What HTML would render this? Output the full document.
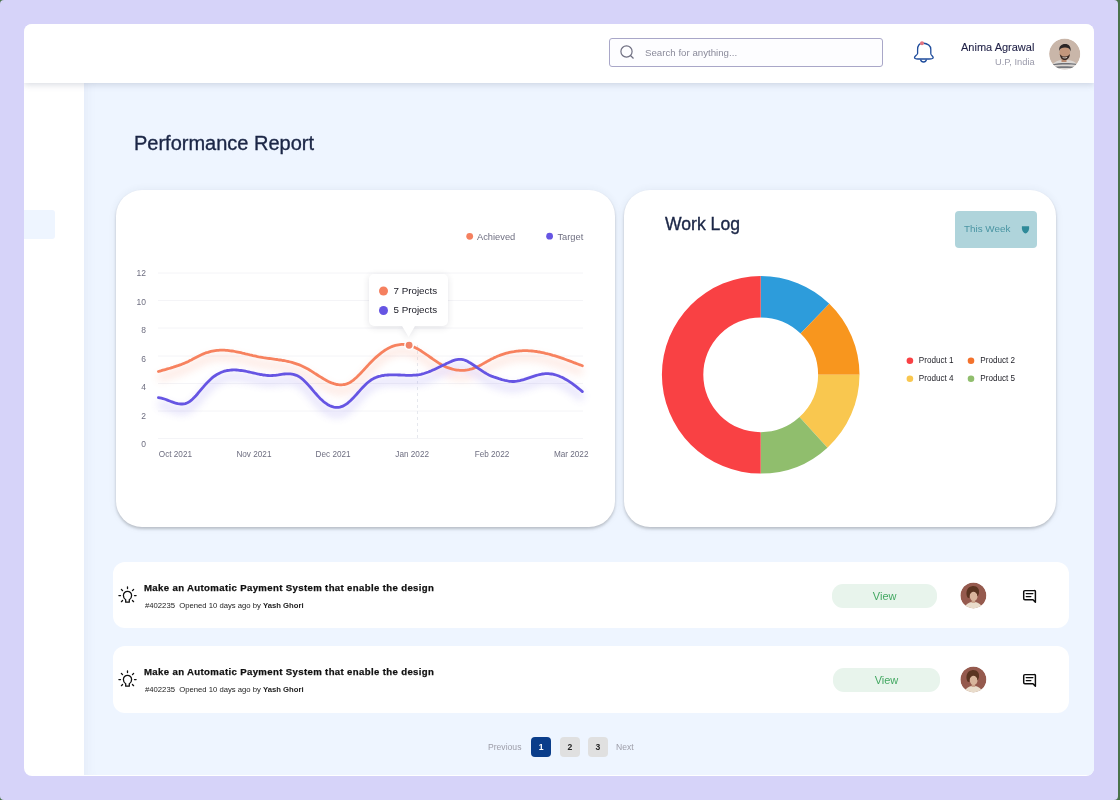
<!DOCTYPE html>
<html><head><meta charset="utf-8">
<style>
html,body{margin:0;padding:0;width:1120px;height:800px;overflow:hidden;background:#4a734b;}
*{box-sizing:border-box;}
body{font-family:"Liberation Sans",sans-serif;position:relative;}
.abs{position:absolute;}
#outer{position:absolute;left:0;top:0;width:1118px;height:800px;background:#d6d3f9;border-radius:4px;}
#frame{position:absolute;left:24px;top:24px;width:1070px;height:751.5px;background:#fff;border-radius:8px;overflow:hidden;}
#main{position:absolute;left:60px;top:59px;width:1010px;height:692px;background:#eef5ff;box-shadow:inset 12px 0 12px -10px rgba(110,120,150,0.08);}
#header{position:absolute;left:0;top:0;width:1070px;height:59px;background:#fff;box-shadow:0 2px 6px rgba(90,100,130,0.22);z-index:3;}
#sidehl{position:absolute;left:0;top:186px;width:31px;height:29px;background:#eef5ff;border-radius:0 3px 3px 0;}
.card{position:absolute;background:#fff;border-radius:26px;box-shadow:0 2px 3px rgba(0,0,0,0.2),0 0 8px rgba(40,50,80,0.07);}
.row{position:absolute;background:#fff;border-radius:12px;}
.t{position:absolute;white-space:pre;line-height:1;will-change:transform;}
svg{will-change:transform;}
</style></head><body>
<div id="outer"></div>
<div id="frame">
  <div id="main"></div>
  <div id="sidehl"></div>
  <div id="header"></div>
</div>

<!-- header content -->
<div class="abs" style="left:609px;top:38px;width:274px;height:29px;border:1px solid #a9a7c8;border-radius:3px;background:#fdfdff;z-index:5"></div>
<svg class="abs" style="left:0;top:0;z-index:6" width="1120" height="800">
  <circle cx="626.5" cy="51.5" r="5.6" fill="none" stroke="#6f6f82" stroke-width="1.2"/>
  <line x1="630.5" y1="55.5" x2="633.5" y2="58.5" stroke="#6f6f82" stroke-width="1.2"/>
</svg>
<div class="t" style="left:645px;top:48.3px;font-size:9.7px;color:#8a8a9a;z-index:6">Search for anything...</div>

<svg class="abs" style="left:0;top:0;z-index:6" width="1120" height="800">
  <path d="M922.5,43 C919,43.5 917.6,46 917.6,49.5 L917.6,53.5 C917.4,55 914.5,56.2 914.5,57.5 C914.5,58.6 916,59 918,59 L929,59 C931,59 933.2,58.6 933.2,57.5 C933.2,56.2 930.5,55 930.8,53.5 L930.8,49.5 C930.8,46 928,43.5 922.5,43 Z" fill="none" stroke="#1f4c9c" stroke-width="1.3"/>
  <path d="M920.5,59.5 C921,61.5 922.5,62 923.6,62 C924.7,62 926,61.5 926.5,59.5" fill="none" stroke="#1f4c9c" stroke-width="1.3"/>
  <circle cx="922" cy="43.2" r="2" fill="#e47581"/>
</svg>
<div class="t" style="left:961px;top:42px;font-size:11px;color:#1f2046;z-index:6;-webkit-text-stroke:0.1px #1f2046">Anima Agrawal</div>
<div class="t" style="left:995px;top:58px;font-size:9.3px;color:#9a9aaa;z-index:6">U.P, India</div>
<svg class="abs" style="left:0;top:0;z-index:6" width="1120" height="800">
  <clipPath id="hav"><circle cx="1064.7" cy="54" r="15.6"/></clipPath>
  <g clip-path="url(#hav)">
    <circle cx="1064.7" cy="54" r="15.6" fill="#c9b6a9"/>
    <path d="M1053,64 C1056,60.5 1060,60 1064,60 C1069,60 1073,60.5 1076,63 L1078,72 L1051,72 Z" fill="#dcd7d3"/>
    <path d="M1053,64.3 C1058,62.8 1070,62.8 1076,63.8 L1076.5,65 C1070,64.2 1058,64.3 1052.5,65.6 Z" fill="#6e7076"/>
    <path d="M1052,67 C1058,66 1070,66 1077,67 L1077,68.5 C1070,67.6 1058,67.8 1052,68.6 Z" fill="#75777c"/>
    <rect x="1061.5" y="57" width="5" height="5" fill="#b98a70"/>
    <ellipse cx="1064.8" cy="52.5" rx="5.3" ry="6.8" fill="#c4977c"/>
    <path d="M1059.8,54 C1060.2,58.5 1062.5,60 1064.8,60 C1067.5,60 1069.6,58.2 1069.9,54 C1068.5,56 1066.5,56.5 1064.8,56.5 C1063,56.5 1061,56 1059.8,54 Z" fill="#3a2a24"/>
    <path d="M1059.2,51 C1058.8,46 1061.5,44 1065,44 C1069,44 1071.2,46.5 1070.6,51.5 C1069.8,48.5 1068,47.6 1065,47.6 C1062,47.6 1060,48.5 1059.2,51 Z" fill="#2b2627"/>
    <path d="M1062.5,57.2 C1063.8,58.2 1066,58.2 1067.2,57.2" stroke="#f2e8e0" stroke-width="0.9" fill="none"/>
  </g>
</svg>

<!-- title -->
<div class="t" style="left:133.5px;top:132.8px;font-size:20px;color:#1b2646;-webkit-text-stroke:0.35px #1b2646">Performance Report</div>

<!-- cards -->
<div class="card" style="left:116px;top:189.5px;width:499px;height:337.8px"></div>
<div class="card" style="left:624px;top:189.5px;width:432px;height:337.8px"></div>


<!-- chart -->
<svg class="abs" style="left:0;top:0;z-index:2" width="1120" height="800">
  <defs>
    <filter id="glow" x="-10%" y="-50%" width="120%" height="200%"><feGaussianBlur stdDeviation="4.2"/></filter>
    <filter id="tipsh" x="-30%" y="-30%" width="160%" height="160%"><feGaussianBlur stdDeviation="3.5"/></filter>
  </defs>
  <line x1="158" y1="273" x2="583" y2="273" stroke="#f4f4f7" stroke-width="1"/><line x1="158" y1="300.5" x2="583" y2="300.5" stroke="#f4f4f7" stroke-width="1"/><line x1="158" y1="328" x2="583" y2="328" stroke="#f4f4f7" stroke-width="1"/><line x1="158" y1="356" x2="583" y2="356" stroke="#f4f4f7" stroke-width="1"/><line x1="158" y1="383.5" x2="583" y2="383.5" stroke="#f4f4f7" stroke-width="1"/><line x1="158" y1="411" x2="583" y2="411" stroke="#f4f4f7" stroke-width="1"/><line x1="158" y1="438.5" x2="583" y2="438.5" stroke="#f4f4f7" stroke-width="1"/>
  <g font-family="Liberation Sans" font-size="8.5" fill="#6e6e80"><text x="146" y="276" text-anchor="end">12</text><text x="146" y="304.5" text-anchor="end">10</text><text x="146" y="333" text-anchor="end">8</text><text x="146" y="361.5" text-anchor="end">6</text><text x="146" y="390" text-anchor="end">4</text><text x="146" y="418.5" text-anchor="end">2</text><text x="146" y="447" text-anchor="end">0</text></g>
  <line x1="417.5" y1="345" x2="417.5" y2="438" stroke="#e6e8ee" stroke-width="1" stroke-dasharray="3,3"/>
  <g filter="url(#glow)" opacity="0.22">
    <path d="M158.4,371.5 L159.9,371.1 L161.4,370.7 L162.9,370.2 L164.4,369.8 L165.9,369.4 L167.4,368.9 L168.9,368.5 L170.4,368.1 L171.9,367.6 L173.4,367.2 L174.9,366.7 L176.4,366.2 L177.9,365.7 L179.4,365.1 L180.9,364.6 L182.4,364.0 L183.9,363.4 L185.4,362.7 L186.9,362.1 L188.4,361.4 L189.9,360.6 L191.4,359.9 L192.9,359.1 L194.4,358.3 L195.9,357.5 L197.4,356.7 L198.9,355.9 L200.4,355.2 L201.9,354.5 L203.4,353.9 L204.9,353.3 L206.4,352.7 L207.9,352.3 L209.4,351.8 L210.9,351.4 L212.4,351.1 L213.9,350.8 L215.4,350.6 L216.9,350.4 L218.4,350.3 L219.9,350.2 L221.4,350.2 L222.9,350.2 L224.4,350.2 L225.9,350.3 L227.4,350.4 L228.9,350.6 L230.4,350.8 L231.9,351.0 L233.4,351.2 L234.9,351.5 L236.4,351.8 L237.9,352.1 L239.4,352.4 L240.9,352.7 L242.4,353.1 L243.9,353.4 L245.4,353.8 L246.9,354.1 L248.4,354.5 L249.9,354.9 L251.4,355.2 L252.9,355.6 L254.4,355.9 L255.9,356.2 L257.4,356.6 L258.9,356.9 L260.4,357.1 L261.9,357.4 L263.4,357.7 L264.9,357.9 L266.4,358.1 L267.9,358.3 L269.4,358.5 L270.9,358.7 L272.4,358.9 L273.9,359.1 L275.4,359.3 L276.9,359.5 L278.4,359.8 L279.9,360.0 L281.4,360.2 L282.9,360.5 L284.4,360.7 L285.9,361.0 L287.4,361.3 L288.9,361.7 L290.4,362.0 L291.9,362.4 L293.4,362.8 L294.9,363.3 L296.4,363.8 L297.9,364.3 L299.4,364.9 L300.9,365.5 L302.4,366.2 L303.9,366.9 L305.4,367.7 L306.9,368.5 L308.4,369.3 L309.9,370.2 L311.4,371.1 L312.9,372.1 L314.4,373.1 L315.9,374.0 L317.4,375.0 L318.9,376.0 L320.4,376.9 L321.9,377.8 L323.4,378.7 L324.9,379.6 L326.4,380.4 L327.9,381.2 L329.4,381.9 L330.9,382.6 L332.4,383.2 L333.9,383.7 L335.4,384.1 L336.9,384.5 L338.4,384.7 L339.9,384.8 L341.4,384.8 L342.9,384.7 L344.4,384.5 L345.9,384.1 L347.4,383.6 L348.9,383.0 L350.4,382.2 L351.9,381.2 L353.4,380.1 L354.9,378.8 L356.4,377.5 L357.9,376.1 L359.4,374.6 L360.9,373.0 L362.4,371.4 L363.9,369.8 L365.4,368.1 L366.9,366.5 L368.4,364.9 L369.9,363.3 L371.4,361.7 L372.9,360.2 L374.4,358.8 L375.9,357.4 L377.4,356.1 L378.9,354.8 L380.4,353.6 L381.9,352.4 L383.4,351.3 L384.9,350.3 L386.4,349.4 L387.9,348.5 L389.4,347.8 L390.9,347.1 L392.4,346.4 L393.9,345.9 L395.4,345.4 L396.9,345.1 L398.4,344.8 L399.9,344.6 L401.4,344.4 L402.9,344.4 L404.4,344.5 L405.9,344.6 L407.4,344.9 L408.9,345.2 L410.4,345.7 L411.9,346.2 L413.4,346.8 L414.9,347.5 L416.4,348.2 L417.9,349.0 L419.4,349.9 L420.9,350.8 L422.4,351.8 L423.9,352.8 L425.4,353.8 L426.9,354.9 L428.4,355.9 L429.9,357.0 L431.4,358.0 L432.9,359.1 L434.4,360.1 L435.9,361.1 L437.4,362.1 L438.9,363.1 L440.4,364.0 L441.9,364.9 L443.4,365.7 L444.9,366.4 L446.4,367.1 L447.9,367.7 L449.4,368.2 L450.9,368.7 L452.4,369.2 L453.9,369.5 L455.4,369.8 L456.9,370.1 L458.4,370.2 L459.9,370.3 L461.4,370.4 L462.9,370.3 L464.4,370.3 L465.9,370.1 L467.4,369.9 L468.9,369.6 L470.4,369.2 L471.9,368.8 L473.4,368.3 L474.9,367.8 L476.4,367.2 L477.9,366.5 L479.4,365.8 L480.9,365.0 L482.4,364.1 L483.9,363.3 L485.4,362.4 L486.9,361.6 L488.4,360.7 L489.9,359.9 L491.4,359.1 L492.9,358.4 L494.4,357.6 L495.9,357.0 L497.4,356.3 L498.9,355.7 L500.4,355.1 L501.9,354.6 L503.4,354.1 L504.9,353.6 L506.4,353.2 L507.9,352.8 L509.4,352.4 L510.9,352.1 L512.4,351.8 L513.9,351.6 L515.4,351.3 L516.9,351.1 L518.4,351.0 L519.9,350.8 L521.4,350.8 L522.9,350.7 L524.4,350.7 L525.9,350.7 L527.4,350.7 L528.9,350.8 L530.4,350.9 L531.9,351.0 L533.4,351.1 L534.9,351.3 L536.4,351.5 L537.9,351.8 L539.4,352.0 L540.9,352.3 L542.4,352.6 L543.9,352.9 L545.4,353.3 L546.9,353.6 L548.4,354.0 L549.9,354.4 L551.4,354.8 L552.9,355.3 L554.4,355.7 L555.9,356.2 L557.4,356.7 L558.9,357.2 L560.4,357.7 L561.9,358.2 L563.4,358.7 L564.9,359.2 L566.4,359.8 L567.9,360.3 L569.4,360.9 L570.9,361.4 L572.4,362.0 L573.9,362.6 L575.4,363.1 L576.9,363.7 L578.4,364.3 L579.9,364.8 L582.4,365.8" transform="translate(0,6.5)" fill="none" stroke="#f5805f" stroke-width="6"/>
    <path d="M158.4,397.7 L159.9,397.9 L161.4,398.2 L162.9,398.6 L164.4,399.0 L165.9,399.5 L167.4,400.1 L168.9,400.7 L170.4,401.3 L171.9,401.8 L173.4,402.4 L174.9,402.9 L176.4,403.3 L177.9,403.7 L179.4,403.9 L180.9,404.0 L182.4,404.0 L183.9,403.9 L185.4,403.6 L186.9,403.0 L188.4,402.3 L189.9,401.4 L191.4,400.2 L192.9,398.8 L194.4,397.3 L195.9,395.7 L197.4,394.0 L198.9,392.2 L200.4,390.4 L201.9,388.6 L203.4,386.9 L204.9,385.1 L206.4,383.5 L207.9,381.9 L209.4,380.4 L210.9,379.0 L212.4,377.7 L213.9,376.5 L215.4,375.5 L216.9,374.5 L218.4,373.7 L219.9,372.9 L221.4,372.3 L222.9,371.7 L224.4,371.2 L225.9,370.8 L227.4,370.5 L228.9,370.3 L230.4,370.1 L231.9,370.0 L233.4,369.9 L234.9,369.9 L236.4,370.0 L237.9,370.1 L239.4,370.3 L240.9,370.5 L242.4,370.7 L243.9,370.9 L245.4,371.2 L246.9,371.5 L248.4,371.8 L249.9,372.2 L251.4,372.5 L252.9,372.8 L254.4,373.2 L255.9,373.5 L257.4,373.9 L258.9,374.2 L260.4,374.5 L261.9,374.7 L263.4,375.0 L264.9,375.2 L266.4,375.4 L267.9,375.5 L269.4,375.6 L270.9,375.6 L272.4,375.5 L273.9,375.4 L275.4,375.3 L276.9,375.1 L278.4,374.9 L279.9,374.6 L281.4,374.4 L282.9,374.2 L284.4,374.0 L285.9,373.9 L287.4,373.8 L288.9,373.8 L290.4,373.9 L291.9,374.1 L293.4,374.3 L294.9,374.8 L296.4,375.3 L297.9,376.0 L299.4,376.9 L300.9,377.9 L302.4,379.1 L303.9,380.5 L305.4,381.9 L306.9,383.5 L308.4,385.1 L309.9,386.8 L311.4,388.5 L312.9,390.3 L314.4,392.1 L315.9,393.8 L317.4,395.5 L318.9,397.1 L320.4,398.7 L321.9,400.1 L323.4,401.5 L324.9,402.7 L326.4,403.7 L327.9,404.7 L329.4,405.5 L330.9,406.2 L332.4,406.7 L333.9,407.1 L335.4,407.3 L336.9,407.4 L338.4,407.3 L339.9,407.1 L341.4,406.6 L342.9,406.1 L344.4,405.3 L345.9,404.4 L347.4,403.3 L348.9,402.0 L350.4,400.7 L351.9,399.2 L353.4,397.7 L354.9,396.1 L356.4,394.5 L357.9,392.8 L359.4,391.1 L360.9,389.4 L362.4,387.8 L363.9,386.2 L365.4,384.7 L366.9,383.3 L368.4,382.0 L369.9,380.8 L371.4,379.8 L372.9,378.9 L374.4,378.1 L375.9,377.5 L377.4,376.9 L378.9,376.4 L380.4,376.1 L381.9,375.7 L383.4,375.5 L384.9,375.2 L386.4,375.1 L387.9,375.0 L389.4,374.9 L390.9,374.8 L392.4,374.8 L393.9,374.8 L395.4,374.9 L396.9,374.9 L398.4,375.0 L399.9,375.0 L401.4,375.1 L402.9,375.2 L404.4,375.2 L405.9,375.3 L407.4,375.3 L408.9,375.3 L410.4,375.3 L411.9,375.3 L413.4,375.2 L414.9,375.1 L416.4,375.0 L417.9,374.8 L419.4,374.6 L420.9,374.3 L422.4,373.9 L423.9,373.5 L425.4,373.0 L426.9,372.5 L428.4,372.0 L429.9,371.4 L431.4,370.8 L432.9,370.1 L434.4,369.4 L435.9,368.7 L437.4,368.0 L438.9,367.3 L440.4,366.6 L441.9,365.8 L443.4,365.1 L444.9,364.4 L446.4,363.6 L447.9,362.9 L449.4,362.2 L450.9,361.6 L452.4,360.9 L453.9,360.4 L455.4,359.9 L456.9,359.6 L458.4,359.3 L459.9,359.3 L461.4,359.3 L462.9,359.6 L464.4,360.0 L465.9,360.6 L467.4,361.3 L468.9,362.2 L470.4,363.0 L471.9,364.0 L473.4,365.0 L474.9,366.0 L476.4,367.0 L477.9,368.1 L479.4,369.1 L480.9,370.1 L482.4,371.1 L483.9,372.1 L485.4,373.0 L486.9,373.9 L488.4,374.7 L489.9,375.4 L491.4,376.1 L492.9,376.6 L494.4,377.2 L495.9,377.7 L497.4,378.2 L498.9,378.7 L500.4,379.1 L501.9,379.6 L503.4,380.0 L504.9,380.4 L506.4,380.7 L507.9,381.0 L509.4,381.3 L510.9,381.4 L512.4,381.5 L513.9,381.5 L515.4,381.3 L516.9,381.2 L518.4,380.9 L519.9,380.6 L521.4,380.2 L522.9,379.8 L524.4,379.4 L525.9,378.9 L527.4,378.4 L528.9,377.9 L530.4,377.4 L531.9,376.9 L533.4,376.4 L534.9,375.9 L536.4,375.4 L537.9,375.0 L539.4,374.6 L540.9,374.3 L542.4,374.0 L543.9,373.8 L545.4,373.7 L546.9,373.6 L548.4,373.6 L549.9,373.8 L551.4,374.0 L552.9,374.2 L554.4,374.6 L555.9,375.0 L557.4,375.5 L558.9,376.0 L560.4,376.7 L561.9,377.3 L563.4,378.1 L564.9,378.9 L566.4,379.7 L567.9,380.6 L569.4,381.6 L570.9,382.6 L572.4,383.7 L573.9,384.8 L575.4,385.9 L576.9,387.1 L578.4,388.3 L579.9,389.5 L582.4,391.6" transform="translate(0,6.5)" fill="none" stroke="#6c5ce7" stroke-width="6"/>
  </g>
  <path d="M158.4,371.5 L159.9,371.1 L161.4,370.7 L162.9,370.2 L164.4,369.8 L165.9,369.4 L167.4,368.9 L168.9,368.5 L170.4,368.1 L171.9,367.6 L173.4,367.2 L174.9,366.7 L176.4,366.2 L177.9,365.7 L179.4,365.1 L180.9,364.6 L182.4,364.0 L183.9,363.4 L185.4,362.7 L186.9,362.1 L188.4,361.4 L189.9,360.6 L191.4,359.9 L192.9,359.1 L194.4,358.3 L195.9,357.5 L197.4,356.7 L198.9,355.9 L200.4,355.2 L201.9,354.5 L203.4,353.9 L204.9,353.3 L206.4,352.7 L207.9,352.3 L209.4,351.8 L210.9,351.4 L212.4,351.1 L213.9,350.8 L215.4,350.6 L216.9,350.4 L218.4,350.3 L219.9,350.2 L221.4,350.2 L222.9,350.2 L224.4,350.2 L225.9,350.3 L227.4,350.4 L228.9,350.6 L230.4,350.8 L231.9,351.0 L233.4,351.2 L234.9,351.5 L236.4,351.8 L237.9,352.1 L239.4,352.4 L240.9,352.7 L242.4,353.1 L243.9,353.4 L245.4,353.8 L246.9,354.1 L248.4,354.5 L249.9,354.9 L251.4,355.2 L252.9,355.6 L254.4,355.9 L255.9,356.2 L257.4,356.6 L258.9,356.9 L260.4,357.1 L261.9,357.4 L263.4,357.7 L264.9,357.9 L266.4,358.1 L267.9,358.3 L269.4,358.5 L270.9,358.7 L272.4,358.9 L273.9,359.1 L275.4,359.3 L276.9,359.5 L278.4,359.8 L279.9,360.0 L281.4,360.2 L282.9,360.5 L284.4,360.7 L285.9,361.0 L287.4,361.3 L288.9,361.7 L290.4,362.0 L291.9,362.4 L293.4,362.8 L294.9,363.3 L296.4,363.8 L297.9,364.3 L299.4,364.9 L300.9,365.5 L302.4,366.2 L303.9,366.9 L305.4,367.7 L306.9,368.5 L308.4,369.3 L309.9,370.2 L311.4,371.1 L312.9,372.1 L314.4,373.1 L315.9,374.0 L317.4,375.0 L318.9,376.0 L320.4,376.9 L321.9,377.8 L323.4,378.7 L324.9,379.6 L326.4,380.4 L327.9,381.2 L329.4,381.9 L330.9,382.6 L332.4,383.2 L333.9,383.7 L335.4,384.1 L336.9,384.5 L338.4,384.7 L339.9,384.8 L341.4,384.8 L342.9,384.7 L344.4,384.5 L345.9,384.1 L347.4,383.6 L348.9,383.0 L350.4,382.2 L351.9,381.2 L353.4,380.1 L354.9,378.8 L356.4,377.5 L357.9,376.1 L359.4,374.6 L360.9,373.0 L362.4,371.4 L363.9,369.8 L365.4,368.1 L366.9,366.5 L368.4,364.9 L369.9,363.3 L371.4,361.7 L372.9,360.2 L374.4,358.8 L375.9,357.4 L377.4,356.1 L378.9,354.8 L380.4,353.6 L381.9,352.4 L383.4,351.3 L384.9,350.3 L386.4,349.4 L387.9,348.5 L389.4,347.8 L390.9,347.1 L392.4,346.4 L393.9,345.9 L395.4,345.4 L396.9,345.1 L398.4,344.8 L399.9,344.6 L401.4,344.4 L402.9,344.4 L404.4,344.5 L405.9,344.6 L407.4,344.9 L408.9,345.2 L410.4,345.7 L411.9,346.2 L413.4,346.8 L414.9,347.5 L416.4,348.2 L417.9,349.0 L419.4,349.9 L420.9,350.8 L422.4,351.8 L423.9,352.8 L425.4,353.8 L426.9,354.9 L428.4,355.9 L429.9,357.0 L431.4,358.0 L432.9,359.1 L434.4,360.1 L435.9,361.1 L437.4,362.1 L438.9,363.1 L440.4,364.0 L441.9,364.9 L443.4,365.7 L444.9,366.4 L446.4,367.1 L447.9,367.7 L449.4,368.2 L450.9,368.7 L452.4,369.2 L453.9,369.5 L455.4,369.8 L456.9,370.1 L458.4,370.2 L459.9,370.3 L461.4,370.4 L462.9,370.3 L464.4,370.3 L465.9,370.1 L467.4,369.9 L468.9,369.6 L470.4,369.2 L471.9,368.8 L473.4,368.3 L474.9,367.8 L476.4,367.2 L477.9,366.5 L479.4,365.8 L480.9,365.0 L482.4,364.1 L483.9,363.3 L485.4,362.4 L486.9,361.6 L488.4,360.7 L489.9,359.9 L491.4,359.1 L492.9,358.4 L494.4,357.6 L495.9,357.0 L497.4,356.3 L498.9,355.7 L500.4,355.1 L501.9,354.6 L503.4,354.1 L504.9,353.6 L506.4,353.2 L507.9,352.8 L509.4,352.4 L510.9,352.1 L512.4,351.8 L513.9,351.6 L515.4,351.3 L516.9,351.1 L518.4,351.0 L519.9,350.8 L521.4,350.8 L522.9,350.7 L524.4,350.7 L525.9,350.7 L527.4,350.7 L528.9,350.8 L530.4,350.9 L531.9,351.0 L533.4,351.1 L534.9,351.3 L536.4,351.5 L537.9,351.8 L539.4,352.0 L540.9,352.3 L542.4,352.6 L543.9,352.9 L545.4,353.3 L546.9,353.6 L548.4,354.0 L549.9,354.4 L551.4,354.8 L552.9,355.3 L554.4,355.7 L555.9,356.2 L557.4,356.7 L558.9,357.2 L560.4,357.7 L561.9,358.2 L563.4,358.7 L564.9,359.2 L566.4,359.8 L567.9,360.3 L569.4,360.9 L570.9,361.4 L572.4,362.0 L573.9,362.6 L575.4,363.1 L576.9,363.7 L578.4,364.3 L579.9,364.8 L582.4,365.8" fill="none" stroke="#f7825f" stroke-width="2.8" stroke-linecap="round"/>
  <path d="M158.4,397.7 L159.9,397.9 L161.4,398.2 L162.9,398.6 L164.4,399.0 L165.9,399.5 L167.4,400.1 L168.9,400.7 L170.4,401.3 L171.9,401.8 L173.4,402.4 L174.9,402.9 L176.4,403.3 L177.9,403.7 L179.4,403.9 L180.9,404.0 L182.4,404.0 L183.9,403.9 L185.4,403.6 L186.9,403.0 L188.4,402.3 L189.9,401.4 L191.4,400.2 L192.9,398.8 L194.4,397.3 L195.9,395.7 L197.4,394.0 L198.9,392.2 L200.4,390.4 L201.9,388.6 L203.4,386.9 L204.9,385.1 L206.4,383.5 L207.9,381.9 L209.4,380.4 L210.9,379.0 L212.4,377.7 L213.9,376.5 L215.4,375.5 L216.9,374.5 L218.4,373.7 L219.9,372.9 L221.4,372.3 L222.9,371.7 L224.4,371.2 L225.9,370.8 L227.4,370.5 L228.9,370.3 L230.4,370.1 L231.9,370.0 L233.4,369.9 L234.9,369.9 L236.4,370.0 L237.9,370.1 L239.4,370.3 L240.9,370.5 L242.4,370.7 L243.9,370.9 L245.4,371.2 L246.9,371.5 L248.4,371.8 L249.9,372.2 L251.4,372.5 L252.9,372.8 L254.4,373.2 L255.9,373.5 L257.4,373.9 L258.9,374.2 L260.4,374.5 L261.9,374.7 L263.4,375.0 L264.9,375.2 L266.4,375.4 L267.9,375.5 L269.4,375.6 L270.9,375.6 L272.4,375.5 L273.9,375.4 L275.4,375.3 L276.9,375.1 L278.4,374.9 L279.9,374.6 L281.4,374.4 L282.9,374.2 L284.4,374.0 L285.9,373.9 L287.4,373.8 L288.9,373.8 L290.4,373.9 L291.9,374.1 L293.4,374.3 L294.9,374.8 L296.4,375.3 L297.9,376.0 L299.4,376.9 L300.9,377.9 L302.4,379.1 L303.9,380.5 L305.4,381.9 L306.9,383.5 L308.4,385.1 L309.9,386.8 L311.4,388.5 L312.9,390.3 L314.4,392.1 L315.9,393.8 L317.4,395.5 L318.9,397.1 L320.4,398.7 L321.9,400.1 L323.4,401.5 L324.9,402.7 L326.4,403.7 L327.9,404.7 L329.4,405.5 L330.9,406.2 L332.4,406.7 L333.9,407.1 L335.4,407.3 L336.9,407.4 L338.4,407.3 L339.9,407.1 L341.4,406.6 L342.9,406.1 L344.4,405.3 L345.9,404.4 L347.4,403.3 L348.9,402.0 L350.4,400.7 L351.9,399.2 L353.4,397.7 L354.9,396.1 L356.4,394.5 L357.9,392.8 L359.4,391.1 L360.9,389.4 L362.4,387.8 L363.9,386.2 L365.4,384.7 L366.9,383.3 L368.4,382.0 L369.9,380.8 L371.4,379.8 L372.9,378.9 L374.4,378.1 L375.9,377.5 L377.4,376.9 L378.9,376.4 L380.4,376.1 L381.9,375.7 L383.4,375.5 L384.9,375.2 L386.4,375.1 L387.9,375.0 L389.4,374.9 L390.9,374.8 L392.4,374.8 L393.9,374.8 L395.4,374.9 L396.9,374.9 L398.4,375.0 L399.9,375.0 L401.4,375.1 L402.9,375.2 L404.4,375.2 L405.9,375.3 L407.4,375.3 L408.9,375.3 L410.4,375.3 L411.9,375.3 L413.4,375.2 L414.9,375.1 L416.4,375.0 L417.9,374.8 L419.4,374.6 L420.9,374.3 L422.4,373.9 L423.9,373.5 L425.4,373.0 L426.9,372.5 L428.4,372.0 L429.9,371.4 L431.4,370.8 L432.9,370.1 L434.4,369.4 L435.9,368.7 L437.4,368.0 L438.9,367.3 L440.4,366.6 L441.9,365.8 L443.4,365.1 L444.9,364.4 L446.4,363.6 L447.9,362.9 L449.4,362.2 L450.9,361.6 L452.4,360.9 L453.9,360.4 L455.4,359.9 L456.9,359.6 L458.4,359.3 L459.9,359.3 L461.4,359.3 L462.9,359.6 L464.4,360.0 L465.9,360.6 L467.4,361.3 L468.9,362.2 L470.4,363.0 L471.9,364.0 L473.4,365.0 L474.9,366.0 L476.4,367.0 L477.9,368.1 L479.4,369.1 L480.9,370.1 L482.4,371.1 L483.9,372.1 L485.4,373.0 L486.9,373.9 L488.4,374.7 L489.9,375.4 L491.4,376.1 L492.9,376.6 L494.4,377.2 L495.9,377.7 L497.4,378.2 L498.9,378.7 L500.4,379.1 L501.9,379.6 L503.4,380.0 L504.9,380.4 L506.4,380.7 L507.9,381.0 L509.4,381.3 L510.9,381.4 L512.4,381.5 L513.9,381.5 L515.4,381.3 L516.9,381.2 L518.4,380.9 L519.9,380.6 L521.4,380.2 L522.9,379.8 L524.4,379.4 L525.9,378.9 L527.4,378.4 L528.9,377.9 L530.4,377.4 L531.9,376.9 L533.4,376.4 L534.9,375.9 L536.4,375.4 L537.9,375.0 L539.4,374.6 L540.9,374.3 L542.4,374.0 L543.9,373.8 L545.4,373.7 L546.9,373.6 L548.4,373.6 L549.9,373.8 L551.4,374.0 L552.9,374.2 L554.4,374.6 L555.9,375.0 L557.4,375.5 L558.9,376.0 L560.4,376.7 L561.9,377.3 L563.4,378.1 L564.9,378.9 L566.4,379.7 L567.9,380.6 L569.4,381.6 L570.9,382.6 L572.4,383.7 L573.9,384.8 L575.4,385.9 L576.9,387.1 L578.4,388.3 L579.9,389.5 L582.4,391.6" fill="none" stroke="#6655e3" stroke-width="2.8" stroke-linecap="round"/>
  <circle cx="409.1" cy="345.3" r="4.2" fill="#f08468" stroke="#fff" stroke-width="1.5"/>
  <path d="M374,274 H443 A5,5 0 0 1 448,279 V321 A5,5 0 0 1 443,326 H415 L408.6,337 L402,326 H374 A5,5 0 0 1 369,321 V279 A5,5 0 0 1 374,274 Z" transform="translate(0,1.5)" fill="#1a1f3a" opacity="0.12" filter="url(#tipsh)"/>
  <path d="M374,274 H443 A5,5 0 0 1 448,279 V321 A5,5 0 0 1 443,326 H415 L408.6,337 L402,326 H374 A5,5 0 0 1 369,321 V279 A5,5 0 0 1 374,274 Z" fill="#fff"/>
  <circle cx="383.5" cy="291" r="4.5" fill="#f5805f"/>
  <circle cx="383.5" cy="310.5" r="4.5" fill="#6655e3"/>
  <g font-family="Liberation Sans" font-size="9.8" fill="#20202a">
    <text x="393.5" y="293.8">7 Projects</text>
    <text x="393.5" y="313.3">5 Projects</text>
  </g>
  <circle cx="469.7" cy="236.3" r="3.4" fill="#f5805f"/>
  <circle cx="549.6" cy="236.2" r="3.4" fill="#6655e3"/>
  <g font-family="Liberation Sans" font-size="9.3" fill="#707082">
    <text x="477" y="240">Achieved</text>
    <text x="557.4" y="240">Target</text>
  </g>
  <g font-family="Liberation Sans" font-size="8.2" fill="#6e6e80">
    <text x="158.8" y="456.5">Oct 2021</text>
    <text x="236.4" y="456.5">Nov 2021</text>
    <text x="315.6" y="456.5">Dec 2021</text>
    <text x="395.3" y="456.5">Jan 2022</text>
    <text x="474.7" y="456.5">Feb 2022</text>
    <text x="553.9" y="456.5">Mar 2022</text>
  </g>
</svg>


<!-- worklog -->
<div class="t" style="left:665px;top:216px;font-size:17.6px;color:#1b2646;z-index:2;-webkit-text-stroke:0.35px #1b2646">Work Log</div>
<div class="abs" style="left:955px;top:210.5px;width:82px;height:37px;background:#afd4db;border-radius:4px;z-index:2"></div>
<div class="t" style="left:964px;top:224px;font-size:9.85px;color:#4a95a3;z-index:3">This Week</div>
<svg class="abs" style="left:0;top:0;z-index:2" width="1120" height="800">
  <path d="M1021.9,226.2 H1029.1 V228.6 C1029.1,231 1027.2,233.4 1025.5,233.6 C1023.8,233.4 1021.9,231 1021.9,228.6 Z" fill="#2f8a99"/>
  <path d="M760.70,276.00 A98.8,98.8 0 0 1 829.33,303.73 L800.57,333.51 A57.4,57.4 0 0 0 760.70,317.40 Z" fill="#2d9cdb"/><path d="M829.33,303.73 A98.8,98.8 0 0 1 859.50,374.80 L818.10,374.80 A57.4,57.4 0 0 0 800.57,333.51 Z" fill="#f8961e"/><path d="M859.50,374.80 A98.8,98.8 0 0 1 827.45,447.64 L799.48,417.12 A57.4,57.4 0 0 0 818.10,374.80 Z" fill="#f9c74f"/><path d="M827.45,447.64 A98.8,98.8 0 0 1 760.70,473.60 L760.70,432.20 A57.4,57.4 0 0 0 799.48,417.12 Z" fill="#90be6d"/><path d="M760.70,473.60 A98.8,98.8 0 0 1 760.70,276.00 L760.70,317.40 A57.4,57.4 0 0 0 760.70,432.20 Z" fill="#f94144"/>
  <circle cx="909.9" cy="360.7" r="3.3" fill="#f94144"/>
  <circle cx="971" cy="360.7" r="3.3" fill="#f3722c"/>
  <circle cx="909.9" cy="378.7" r="3.3" fill="#f9c74f"/>
  <circle cx="971" cy="378.7" r="3.3" fill="#90be6d"/>
  <g font-family="Liberation Sans" font-size="8.15" fill="#1e1e26">
    <text x="918.8" y="363">Product 1</text>
    <text x="980.3" y="363">Product 2</text>
    <text x="918.8" y="381">Product 4</text>
    <text x="980.3" y="381">Product 5</text>
  </g>
</svg>

<!-- rows -->
<div class="row" style="left:113px;top:562px;width:956px;height:66.3px"></div>
<div class="row" style="left:113px;top:646px;width:956px;height:66.5px"></div>


<div class="t" style="left:143.8px;top:582.6px;font-size:9.6px;letter-spacing:0.36px;font-weight:bold;color:#111;-webkit-text-stroke:0.25px #111;z-index:2">Make an Automatic Payment System that enable the design</div>
<div class="t" style="left:145.2px;top:602px;font-size:7.7px;color:#222;z-index:2">#402235  Opened 10 days ago by <b>Yash Ghori</b></div>
<div class="abs" style="left:831.6px;top:583.6px;width:105.4px;height:24.6px;border-radius:11px;background:#e8f4ec;z-index:2"></div>
<div class="t" style="left:831.6px;width:105.4px;text-align:center;top:591px;font-size:11px;color:#43a862;z-index:3">View</div>

<div class="t" style="left:143.8px;top:666.6px;font-size:9.6px;letter-spacing:0.36px;font-weight:bold;color:#111;-webkit-text-stroke:0.25px #111;z-index:2">Make an Automatic Payment System that enable the design</div>
<div class="t" style="left:145.2px;top:686px;font-size:7.7px;color:#222;z-index:2">#402235  Opened 10 days ago by <b>Yash Ghori</b></div>
<div class="abs" style="left:833px;top:667.6px;width:107px;height:24.6px;border-radius:11px;background:#e8f4ec;z-index:2"></div>
<div class="t" style="left:833px;width:107px;text-align:center;top:675px;font-size:11px;color:#43a862;z-index:3">View</div>
<svg class="abs" style="left:0;top:0;z-index:2" width="1120" height="800"><g stroke="#111" fill="none" stroke-width="1.3" stroke-linecap="round" stroke-linejoin="round"><path d="M125.70,602.20 L125.70,599.80 C124.10,598.80 123.40,597.20 123.40,595.40 A4.1,4.1 0 1 1 131.60,595.40 C131.60,597.20 130.90,598.80 129.30,599.80 L129.30,602.20 Z"/><line x1="127.50" y1="588.60" x2="127.50" y2="587.00"/><line x1="132.45" y1="590.65" x2="133.58" y2="589.52"/><line x1="122.55" y1="590.65" x2="121.42" y2="589.52"/><line x1="134.50" y1="595.60" x2="136.10" y2="595.60"/><line x1="120.50" y1="595.60" x2="118.90" y2="595.60"/><line x1="132.45" y1="600.55" x2="133.58" y2="601.68"/><line x1="122.55" y1="600.55" x2="121.42" y2="601.68"/></g><path d="M1024.9,590.6 H1034.2 A1,1 0 0 1 1035.4,591.8 V602.3 L1033,599.8 H1024.9 A1.2,1.2 0 0 1 1023.7,598.6 V591.8 A1.2,1.2 0 0 1 1024.9,590.6 Z" fill="none" stroke="#0d0d0d" stroke-width="1.45" stroke-linejoin="round"/>
    <line x1="1026.2" y1="593.5" x2="1032.9" y2="593.5" stroke="#0d0d0d" stroke-width="1.25" stroke-linecap="round"/>
    <line x1="1026.2" y1="596.5" x2="1030.9" y2="596.5" stroke="#0d0d0d" stroke-width="1.25" stroke-linecap="round"/><g clip-path="url(#fc0)">
    <circle cx="973.4" cy="595.4" r="13" fill="#955a4e"/>
    <path d="M964.4,609.4 C965.4,603.4 969.4,601.9 973.4,601.9 C977.4,601.9 981.4,603.4 982.4,609.4 Z" fill="#e9dccb"/>
    <rect x="971.6" y="598.4" width="3.6" height="4.5" fill="#c9a088"/>
    <ellipse cx="973.6999999999999" cy="596.0" rx="3.9" ry="5" fill="#d8b59c"/>
    <path d="M967.1999999999999,596.9 C965.4,592.4 966.9,586.9 971.9,586.1999999999999 C976.9,585.4 979.9,588.9 978.9,593.4 C978.4,594.9 977.9,595.9 977.4,596.4 C977.1999999999999,592.9 974.9,591.4 972.4,591.9 C970.4,592.4 969.1999999999999,594.4 969.4,597.9 C968.4,597.9 967.6,597.6 967.1999999999999,596.9 Z" fill="#5a3421"/>
    </g>
    <clipPath id="fc0"><circle cx="973.4" cy="595.4" r="13"/></clipPath><g stroke="#111" fill="none" stroke-width="1.3" stroke-linecap="round" stroke-linejoin="round"><path d="M125.70,686.20 L125.70,683.80 C124.10,682.80 123.40,681.20 123.40,679.40 A4.1,4.1 0 1 1 131.60,679.40 C131.60,681.20 130.90,682.80 129.30,683.80 L129.30,686.20 Z"/><line x1="127.50" y1="672.60" x2="127.50" y2="671.00"/><line x1="132.45" y1="674.65" x2="133.58" y2="673.52"/><line x1="122.55" y1="674.65" x2="121.42" y2="673.52"/><line x1="134.50" y1="679.60" x2="136.10" y2="679.60"/><line x1="120.50" y1="679.60" x2="118.90" y2="679.60"/><line x1="132.45" y1="684.55" x2="133.58" y2="685.68"/><line x1="122.55" y1="684.55" x2="121.42" y2="685.68"/></g><path d="M1024.9,674.6 H1034.2 A1,1 0 0 1 1035.4,675.8 V686.3 L1033,683.8 H1024.9 A1.2,1.2 0 0 1 1023.7,682.6 V675.8 A1.2,1.2 0 0 1 1024.9,674.6 Z" fill="none" stroke="#0d0d0d" stroke-width="1.45" stroke-linejoin="round"/>
    <line x1="1026.2" y1="677.5" x2="1032.9" y2="677.5" stroke="#0d0d0d" stroke-width="1.25" stroke-linecap="round"/>
    <line x1="1026.2" y1="680.5" x2="1030.9" y2="680.5" stroke="#0d0d0d" stroke-width="1.25" stroke-linecap="round"/><g clip-path="url(#fc1)">
    <circle cx="973.4" cy="679.4" r="13" fill="#955a4e"/>
    <path d="M964.4,693.4 C965.4,687.4 969.4,685.9 973.4,685.9 C977.4,685.9 981.4,687.4 982.4,693.4 Z" fill="#e9dccb"/>
    <rect x="971.6" y="682.4" width="3.6" height="4.5" fill="#c9a088"/>
    <ellipse cx="973.6999999999999" cy="680.0" rx="3.9" ry="5" fill="#d8b59c"/>
    <path d="M967.1999999999999,680.9 C965.4,676.4 966.9,670.9 971.9,670.1999999999999 C976.9,669.4 979.9,672.9 978.9,677.4 C978.4,678.9 977.9,679.9 977.4,680.4 C977.1999999999999,676.9 974.9,675.4 972.4,675.9 C970.4,676.4 969.1999999999999,678.4 969.4,681.9 C968.4,681.9 967.6,681.6 967.1999999999999,680.9 Z" fill="#5a3421"/>
    </g>
    <clipPath id="fc1"><circle cx="973.4" cy="679.4" r="13"/></clipPath></svg>
<!-- pagination -->
<div class="t" style="left:487.9px;top:743px;font-size:8.6px;color:#9d9da8">Previous</div>
<div class="abs" style="left:531px;top:737px;width:20.4px;height:20px;border-radius:4px;background:#0a3d8a"></div>
<div class="abs" style="left:559.6px;top:737px;width:20px;height:20px;border-radius:4px;background:#e0e0e0"></div>
<div class="abs" style="left:587.9px;top:737px;width:20px;height:20px;border-radius:4px;background:#e0e0e0"></div>
<div class="t" style="left:531px;width:20.4px;text-align:center;top:743px;font-size:8.6px;font-weight:bold;color:#fff">1</div>
<div class="t" style="left:559.6px;width:20px;text-align:center;top:743px;font-size:8.6px;font-weight:bold;color:#222">2</div>
<div class="t" style="left:587.9px;width:20px;text-align:center;top:743px;font-size:8.6px;font-weight:bold;color:#222">3</div>
<div class="t" style="left:616.4px;top:743px;font-size:8.6px;color:#9d9da8">Next</div>

</body></html>
